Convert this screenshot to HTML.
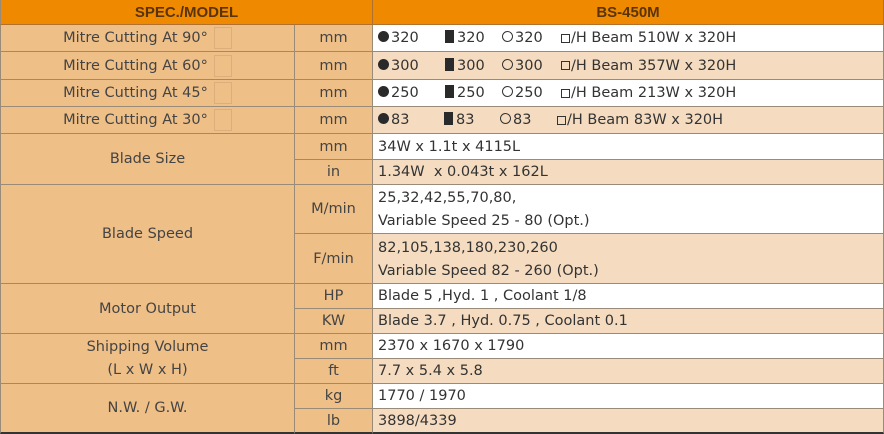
<!DOCTYPE html>
<html><head><meta charset="utf-8"><style>
body{margin:0;width:884px;height:434px;overflow:hidden;background:#fff;font-family:"DejaVu Sans","Liberation Sans",sans-serif;font-size:14.5px;color:#333;}
.c{position:absolute;box-sizing:border-box;border-right:1px solid #9a8a78;border-bottom:1px solid #9a8a78;display:flex;align-items:center;white-space:nowrap}
.l{background:#efbf88;justify-content:center;text-align:center;color:#444;}
.w{background:#fff;padding-left:5px;}
.t{background:#f5dcc0;padding-left:5px;}
.h{background:#ef8a00;color:#5a3408;font-weight:bold;justify-content:center;border-color:#b07030;font-family:"Liberation Sans",sans-serif;font-size:15px}
.bx{display:inline-block;width:16px;height:20px;border:1px solid #dcae7c;margin-left:6px;vertical-align:middle}
.sq{display:inline-block;width:9px;height:13px;background:#2a2a2a;margin-right:3px;vertical-align:-1px}
.dot{display:inline-block;width:11px;height:11px;border-radius:50%;background:#2a2a2a;margin-right:2px;vertical-align:0}
.ring{display:inline-block;width:9px;height:9px;border-radius:50%;border:1px solid #333;margin-right:2px;vertical-align:0}
.sb{display:inline-block;width:7px;height:7px;border:1px solid #333;margin-right:1px;vertical-align:-1px}
.ml{line-height:23px;display:block;padding-top:2px}
.a{display:inline-block}
</style></head><body>
<div class="c h" style="left:0;top:0;width:373px;height:25px;border-left:1px solid #9a8a78">SPEC./MODEL</div>
<div class="c h" style="left:373px;top:0;width:511px;height:25px">BS-450M</div>

<div class="c l" style="left:0;top:25px;width:295px;height:27px;border-left:1px solid #9a8a78">Mitre Cutting At 90°<span class="bx"></span></div>
<div class="c l" style="left:0;top:52px;width:295px;height:28px;border-left:1px solid #9a8a78">Mitre Cutting At 60°<span class="bx"></span></div>
<div class="c l" style="left:0;top:80px;width:295px;height:27px;border-left:1px solid #9a8a78">Mitre Cutting At 45°<span class="bx"></span></div>
<div class="c l" style="left:0;top:107px;width:295px;height:27px;border-left:1px solid #9a8a78">Mitre Cutting At 30°<span class="bx"></span></div>
<div class="c l" style="left:0;top:134px;width:295px;height:51px;border-left:1px solid #9a8a78">Blade Size</div>
<div class="c l" style="left:0;top:185px;width:295px;height:99px;border-left:1px solid #9a8a78">Blade Speed</div>
<div class="c l" style="left:0;top:284px;width:295px;height:50px;border-left:1px solid #9a8a78">Motor Output</div>
<div class="c l" style="left:0;top:334px;width:295px;height:50px;border-left:1px solid #9a8a78;line-height:23px">Shipping Volume<br>(L x W x H)</div>
<div class="c l" style="left:0;top:384px;width:295px;height:50px;border-left:1px solid #9a8a78;border-bottom:2px solid #333">N.W. / G.W.</div>

<div class="c l" style="left:295px;top:25px;width:78px;height:27px">mm</div>
<div class="c l" style="left:295px;top:52px;width:78px;height:28px">mm</div>
<div class="c l" style="left:295px;top:80px;width:78px;height:27px">mm</div>
<div class="c l" style="left:295px;top:107px;width:78px;height:27px">mm</div>
<div class="c l" style="left:295px;top:134px;width:78px;height:26px">mm</div>
<div class="c l" style="left:295px;top:160px;width:78px;height:25px">in</div>
<div class="c l" style="left:295px;top:185px;width:78px;height:49px">M/min</div>
<div class="c l" style="left:295px;top:234px;width:78px;height:50px">F/min</div>
<div class="c l" style="left:295px;top:284px;width:78px;height:25px">HP</div>
<div class="c l" style="left:295px;top:309px;width:78px;height:25px">KW</div>
<div class="c l" style="left:295px;top:334px;width:78px;height:25px">mm</div>
<div class="c l" style="left:295px;top:359px;width:78px;height:25px">ft</div>
<div class="c l" style="left:295px;top:384px;width:78px;height:25px">kg</div>
<div class="c l" style="left:295px;top:409px;width:78px;height:25px;border-bottom:2px solid #333">lb</div>

<div class="c w" style="left:373px;top:25px;width:511px;height:27px"><span class="a" style="width:67px"><i class="dot"></i>320</span><span class="a" style="width:57px"><i class="sq"></i>320</span><span class="a" style="width:59px"><i class="ring"></i>320</span><i class="sb"></i>/H Beam 510W x 320H</div>
<div class="c t" style="left:373px;top:52px;width:511px;height:28px"><span class="a" style="width:67px"><i class="dot"></i>300</span><span class="a" style="width:57px"><i class="sq"></i>300</span><span class="a" style="width:59px"><i class="ring"></i>300</span><i class="sb"></i>/H Beam 357W x 320H</div>
<div class="c w" style="left:373px;top:80px;width:511px;height:27px"><span class="a" style="width:67px"><i class="dot"></i>250</span><span class="a" style="width:57px"><i class="sq"></i>250</span><span class="a" style="width:59px"><i class="ring"></i>250</span><i class="sb"></i>/H Beam 213W x 320H</div>
<div class="c t" style="left:373px;top:107px;width:511px;height:27px"><span class="a" style="width:66px"><i class="dot"></i>83</span><span class="a" style="width:56px"><i class="sq"></i>83</span><span class="a" style="width:57px"><i class="ring"></i>83</span><i class="sb"></i>/H Beam 83W x 320H</div>
<div class="c w" style="left:373px;top:134px;width:511px;height:26px">34W x 1.1t x 4115L</div>
<div class="c t" style="left:373px;top:160px;width:511px;height:25px">1.34W&nbsp; x 0.043t x 162L</div>
<div class="c w" style="left:373px;top:185px;width:511px;height:49px"><span class="ml">25,32,42,55,70,80,<br>Variable Speed 25 - 80 (Opt.)</span></div>
<div class="c t" style="left:373px;top:234px;width:511px;height:50px"><span class="ml">82,105,138,180,230,260<br>Variable Speed 82 - 260 (Opt.)</span></div>
<div class="c w" style="left:373px;top:284px;width:511px;height:25px">Blade 5 ,Hyd. 1 , Coolant 1/8</div>
<div class="c t" style="left:373px;top:309px;width:511px;height:25px">Blade 3.7 , Hyd. 0.75 , Coolant 0.1</div>
<div class="c w" style="left:373px;top:334px;width:511px;height:25px">2370 x 1670 x 1790</div>
<div class="c t" style="left:373px;top:359px;width:511px;height:25px">7.7 x 5.4 x 5.8</div>
<div class="c w" style="left:373px;top:384px;width:511px;height:25px">1770 / 1970</div>
<div class="c t" style="left:373px;top:409px;width:511px;height:25px;border-bottom:2px solid #333">3898/4339</div>
</body></html>
